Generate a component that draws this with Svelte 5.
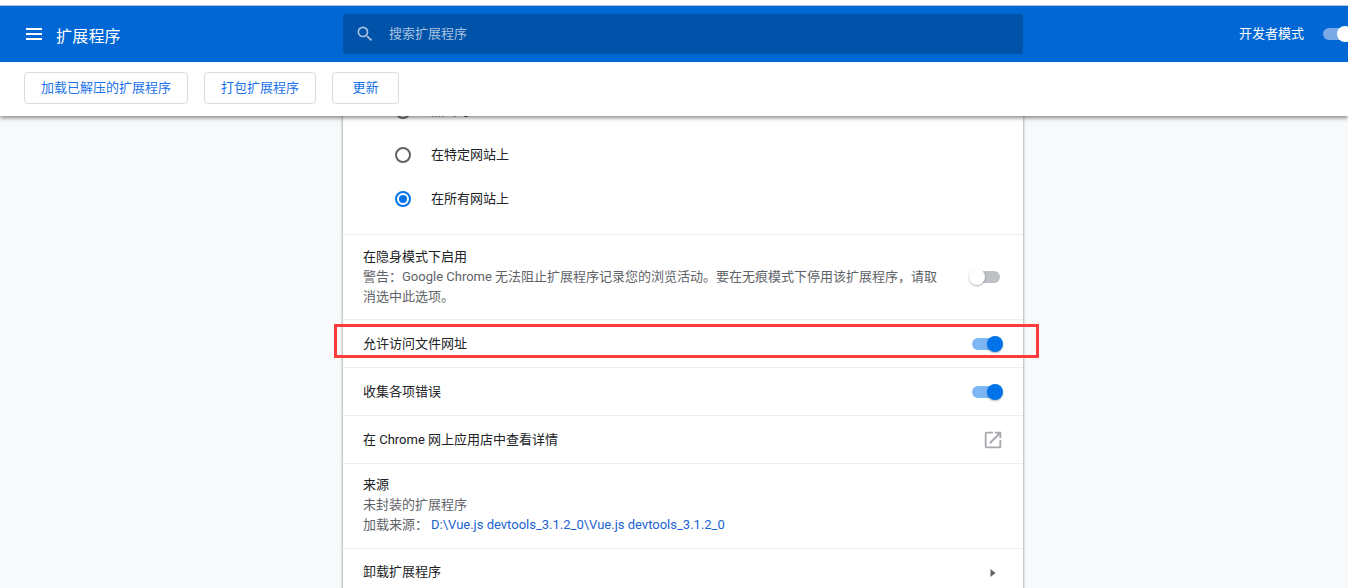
<script>
  const radios = [
    { label: "点击时", checked: false },
    { label: "在特定网站上", checked: false },
    { label: "在所有网站上", checked: true },
  ];
  const buttons = ["加载已解压的扩展程序", "打包扩展程序", "更新"];
</script>

<div class="page">
  <header class="topbar">
    <div class="left">
      <svg class="menu" width="18" height="12" viewBox="0 0 18 12"><path d="M1 0h16v2H1zM1 5h16v2H1zM1 10h16v2H1z" fill="#fff" /></svg>
      <span class="title">扩展程序</span>
    </div>
    <div class="search">
      <svg width="20" height="20" viewBox="0 0 24 24"><path d="M15.5 14h-.79l-.28-.27A6.47 6.47 0 0 0 16 9.5 6.5 6.5 0 1 0 9.5 16c1.61 0 3.09-.59 4.23-1.57l.27.28v.79l5 4.99L20.49 19l-4.99-5zm-6 0C7.01 14 5 11.99 5 9.5S7.01 5 9.5 5 14 7.01 14 9.5 11.99 14 9.5 14z" fill="#a9c1e0" /></svg>
      <span>搜索扩展程序</span>
    </div>
    <div class="dev">
      <span>开发者模式</span>
      <div class="dev-toggle"><i></i></div>
    </div>
  </header>

  <div class="toolbar">
    {#each buttons as b}
      <button>{b}</button>
    {/each}
  </div>

  <main>
    <section class="card">
      <div class="radios">
        {#each radios as r}
          <div class="radio-row">
            <span class="radio" class:checked={r.checked}></span>
            <span class="radio-label">{r.label}</span>
          </div>
        {/each}
      </div>

      <div class="row incognito">
        <div class="grow">
          <div>在隐身模式下启用</div>
          <div class="sub">警告：Google Chrome 无法阻止扩展程序记录您的浏览活动。要在无痕模式下停用该扩展程序，请取消选中此选项。</div>
        </div>
        <div class="toggle off"><i></i></div>
      </div>

      <div class="row single">
        <div class="grow">允许访问文件网址</div>
        <div class="toggle"><i></i></div>
      </div>

      <div class="row single">
        <div class="grow">收集各项错误</div>
        <div class="toggle"><i></i></div>
      </div>

      <div class="row single">
        <div class="grow">在 Chrome 网上应用店中查看详情</div>
        <svg class="open" width="22" height="22" viewBox="0 0 24 24"><path d="M19 19H5V5h7V3H5a2 2 0 0 0-2 2v14a2 2 0 0 0 2 2h14a2 2 0 0 0 2-2v-7h-2v7zM14 3v2h3.59l-9.83 9.83 1.41 1.41L19 6.41V10h2V3h-7z" fill="#a6aaae" /></svg>
      </div>

      <div class="row source">
        <div>来源</div>
        <div class="sub">未封装的扩展程序</div>
        <div class="sub">加载来源：<span class="link">D:\Vue.js devtools_3.1.2_0\Vue.js devtools_3.1.2_0</span></div>
      </div>

      <div class="row single last">
        <div class="grow uninstall">卸载扩展程序</div>
        <svg class="arrow" width="6" height="10" viewBox="0 0 6 10"><path d="M0.5 1l5 4-5 4z" fill="#5f6368" /></svg>
      </div>
    </section>
    <div class="highlight"></div>
  </main>
</div>

<style>
  :global(body) {
    margin: 0;
    background: #fff;
  }

  .page {
    height: 588px;
    overflow: hidden;
    display: flex;
    flex-direction: column;
    padding-top: 5px;
    box-sizing: border-box;
    font-family: Roboto, "Noto Sans CJK SC", sans-serif;
    font-size: 13px;
    color: #202124;
  }

  .topbar {
    height: 56px;
    flex: none;
    border-top: 1px solid #b4c4da;
    background: #0067d5;
    color: #fff;
    display: flex;
    align-items: center;
    position: relative;
    z-index: 3;
  }

  .left {
    width: 343px;
    flex: none;
    display: flex;
    align-items: center;
    padding-left: 25px;
    box-sizing: border-box;
    gap: 13px;
  }

  .title {
    font-size: 16px;
    margin-top: 2px;
    letter-spacing: 0.2px;
  }

  .search {
    width: 680px;
    height: 40px;
    flex: none;
    margin-top: -1px;
    background: #0053a8;
    border-radius: 2px;
    display: flex;
    align-items: center;
    color: #a9c1e0;
    padding-left: 12px;
    gap: 14px;
    box-sizing: border-box;
  }

  .search span {
    margin-bottom: 2px;
  }

  .dev {
    flex: 1;
    display: flex;
    align-items: center;
    justify-content: flex-end;
    margin-top: -2px;
    overflow: hidden;
    gap: 19px;
    height: 30px;
  }

  .dev span {
    margin-bottom: 2px;
  }

  .dev-toggle {
    width: 25px;
    flex: none;
    height: 12px;
    margin-top: 2px;
    background: #7aaae6;
    border-radius: 6px;
    position: relative;
  }

  .dev-toggle i {
    position: absolute;
    left: 14px;
    top: -2px;
    width: 16px;
    height: 16px;
    border-radius: 50%;
    background: #fff;
  }

  .toolbar {
    height: 54px;
    flex: none;
    background: #fff;
    display: flex;
    align-items: center;
    gap: 16px;
    padding-left: 24px;
    box-shadow: 0 2px 4px rgba(60, 64, 67, 0.6);
    position: relative;
    z-index: 2;
  }

  button {
    height: 32px;
    min-width: 67px;
    padding: 0 16px 3px;
    margin-top: -2px;
    background: #fff;
    border: 1px solid #dadce0;
    border-radius: 4px;
    color: #1a73e8;
    font: inherit;
  }

  main {
    flex: 1;
    background: #f8f9fa;
    position: relative;
    overflow: hidden;
  }

  .card {
    width: 680px;
    margin: -27px 0 0 343px;
    background: #fff;
    box-shadow: 0 0 3px rgba(60, 64, 67, 0.65);
  }

  .radios {
    padding: 0 0 13px;
    border-bottom: 1px solid #eceef0;
  }

  .radio-row {
    height: 44px;
    display: flex;
    align-items: center;
    padding-left: 52px;
    gap: 20px;
  }

  .radio-label {
    margin-bottom: 3px;
  }

  .radio {
    width: 16px;
    height: 16px;
    border: 2px solid #5f6368;
    border-radius: 50%;
    box-sizing: border-box;
    position: relative;
  }

  .radio.checked {
    border-color: #0073ea;
  }

  .radio.checked::after {
    content: "";
    position: absolute;
    inset: 2px;
    border-radius: 50%;
    background: #0073ea;
  }

  .row {
    padding: 0 20px;
    border-bottom: 1px solid #eceef0;
    display: flex;
    align-items: center;
    line-height: 20px;
  }

  .grow {
    flex: 1;
  }

  .single {
    height: 47px;
  }

  .last {
    border-bottom: 0;
  }

  .uninstall {
    margin-bottom: 2px;
  }

  .incognito {
    height: 85px;
    gap: 28px;
    padding-bottom: 1px;
    box-sizing: border-box;
  }

  .incognito .toggle {
    margin-top: 1px;
  }

  .sub {
    color: #5f6368;
  }

  .link {
    color: #1a63d0;
    margin-left: 3px;
  }

  .source {
    height: 85px;
    padding-bottom: 2px;
    box-sizing: border-box;
    flex-direction: column;
    align-items: flex-start;
    justify-content: center;
  }

  .toggle {
    width: 28px;
    height: 12px;
    flex: none;
    margin: 1px 3px 0 0;
    background: #7cb6f4;
    border-radius: 6px;
    position: relative;
  }

  .toggle i {
    position: absolute;
    right: -3px;
    top: -2px;
    width: 16px;
    height: 16px;
    border-radius: 50%;
    background: #0073ea;
    box-shadow: 0 1px 2px rgba(0, 0, 0, 0.3);
  }

  .toggle.off {
    background: #bdc1c6;
  }

  .toggle.off i {
    right: auto;
    left: -3px;
    background: #fff;
  }

  .open {
    margin-right: -1px;
  }

  .arrow {
    margin-right: 7px;
  }

  /* annotation drawn over the screenshot */
  .highlight {
    position: absolute;
    left: 334px;
    top: 208px;
    width: 699px;
    height: 28px;
    border: 3px solid #ff3b3b;
  }
</style>
